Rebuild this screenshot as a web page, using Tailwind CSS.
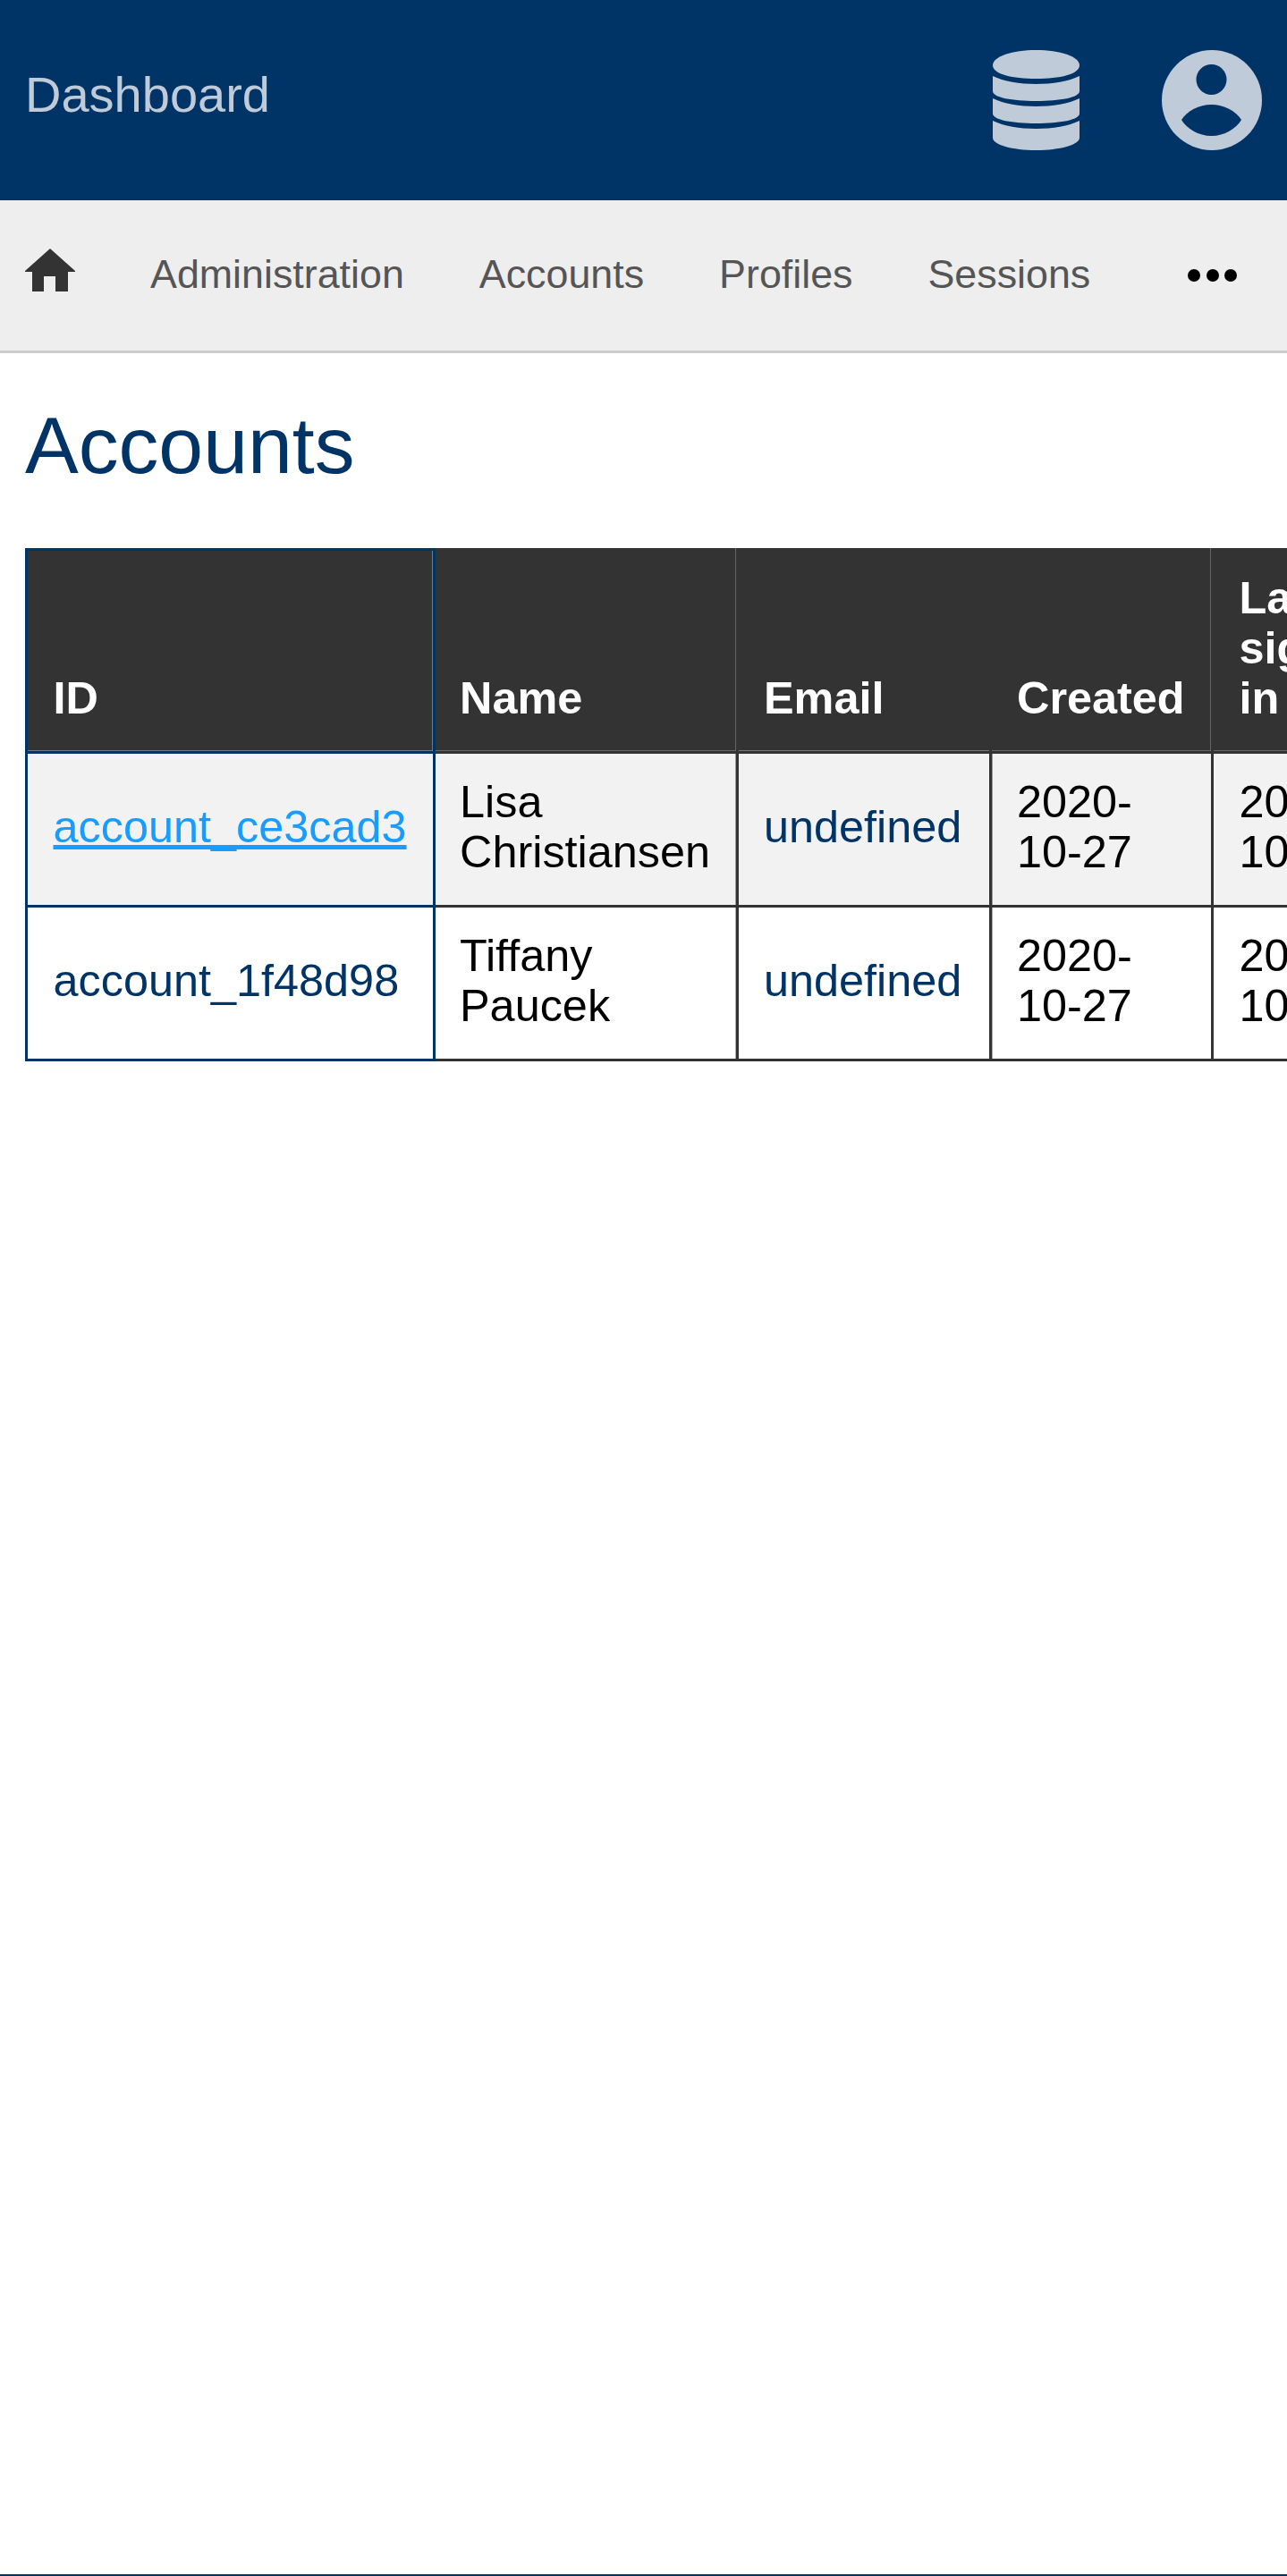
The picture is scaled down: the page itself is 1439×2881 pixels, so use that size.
<!DOCTYPE html>
<html lang="en">
<head>
    <meta charset="UTF-8">
    <meta name="viewport" content="width=device-width, initial-scale=1.0">
    <title>Accounts</title>
    <script src="https://cdn.jsdelivr.net/npm/@tailwindcss/browser@4"></script>
</head>
<body class="bg-white font-['Liberation_Sans',Arial,sans-serif]">
    <div class="min-h-[2881px] flex flex-col border-b-2 border-[#003366] overflow-hidden">
        <!-- Header -->
        <header class="h-[224px] bg-[#003366] flex items-center pl-[28px] text-[#bfcbd9]">
            <span class="text-[56px] leading-none flex-1 -mt-[12px]">Dashboard</span>
            <svg class="w-[97px] h-[112px] ml-[92px]" viewBox="0 0 97 112" fill="currentColor">
                <path d="M0 17C0 7 22 0 48.5 0S97 7 97 17S75 32 48.5 32S0 27 0 17Z" />
                <path d="M0 29C12 35 30 38 48.5 38S85 35 97 29V46C97 53 75 57 48.5 57S0 53 0 46Z" />
                <path d="M0 54C12 60 30 63 48.5 63S85 60 97 54V71C97 78 75 82 48.5 82S0 78 0 71Z" />
                <path d="M0 79C12 85 30 88 48.5 88S85 85 97 79V98C97 106 75 112 48.5 112S0 106 0 98Z" />
            </svg>
            <svg class="w-[112px] h-[112px] ml-[92px] mr-[28px]" viewBox="0 0 112 112">
                <circle cx="56" cy="56" r="56" fill="currentColor" />
                <circle cx="55.5" cy="33" r="17" fill="#003366" />
                <path d="M22 78C28 68 42 61 55.5 61S83 68 89 78C83 88 70 96 55.5 96S28 88 22 78Z" fill="#003366" />
            </svg>
        </header>

        <!-- Nav -->
        <nav class="h-[171px] bg-[#eeeeee] border-b-[3px] border-[#cccccc] flex items-center pl-[28px] text-[44.8px] text-[#555555] whitespace-nowrap">
            <svg class="w-[56px] h-[48px] -mt-[12px] shrink-0" viewBox="0 0 56 48" fill="#333333">
                <path d="M28 0L56 25V26H48V48H34V31H21V48H8V26H0V25Z" />
            </svg>
            <a class="ml-[84px] -mt-[2px]">Administration</a>
            <a class="ml-[84px] -mt-[2px]">Accounts</a>
            <a class="ml-[84px] -mt-[2px]">Profiles</a>
            <a class="ml-[84px] -mt-[2px]">Sessions</a>
            <div class="ml-[109px] flex gap-[6.5px] shrink-0">
                <span class="w-[14px] h-[14px] rounded-full bg-black"></span>
                <span class="w-[14px] h-[14px] rounded-full bg-black"></span>
                <span class="w-[14px] h-[14px] rounded-full bg-black"></span>
            </div>
        </nav>

        <!-- Content -->
        <main class="pl-[28px]">
            <h1 class="text-[89.6px] leading-[103px] text-[#003366] mt-[52px] mb-[63px]">Accounts</h1>
            <table class="table-fixed w-[1700px] border-separate border-spacing-0 text-[50.4px] leading-[56px] text-black">
                <colgroup>
                    <col class="w-[459px]">
                    <col class="w-[339px]">
                    <col class="w-[283px]">
                    <col class="w-[248px]">
                    <col class="w-[190px]">
                    <col>
                </colgroup>
                <thead>
                    <tr class="bg-[#333333] text-white font-bold text-left align-bottom">
                        <th class="pl-[28.5px] pr-[28px] pt-[28px] pb-[31px] border-[3px] border-[#003366] shadow-[inset_-1px_-1px_0_#777777]">ID</th>
                        <th class="pl-[27px] pr-[28px] pt-[28px] pb-[31px] border-r-[3px] border-b-[3px] border-[#333333] shadow-[inset_-1px_-1px_0_#666666]">Name</th>
                        <th class="pl-[28px] pr-[28px] pt-[28px] pb-[31px] border-r-[3px] border-b-[3px] border-[#333333] shadow-[inset_0_-1px_0_#777777]">Email</th>
                        <th class="pl-[28px] pr-[28px] pt-[28px] pb-[31px] border-r-[3px] border-b-[3px] border-[#333333] shadow-[inset_-1px_-1px_0_#666666]">Created</th>
                        <th class="pl-[28.5px] pr-[28px] pt-[28px] pb-[31px] border-r-[3px] border-b-[3px] border-[#333333] shadow-[inset_-1px_-1px_0_#666666]">Last sign in</th>
                        <th class="border-b-[3px] border-[#333333] shadow-[inset_0_-1px_0_#777777]"></th>
                    </tr>
                </thead>
                <tbody>
                    <tr class="bg-[#f2f2f2]">
                        <td class="pl-[28.5px] pr-[28px] pt-[26px] pb-[31px] border-x-[3px] border-b-[3px] border-[#003366]"><a class="text-[#1a9cff] underline">account_ce3cad3</a></td>
                        <td class="pl-[27px] pr-[28px] pt-[26px] pb-[31px] border-r-[3px] border-b-[3px] border-[#333333] shadow-[inset_-1px_0_0_#999999]">Lisa Christiansen</td>
                        <td class="pl-[28px] pr-[28px] pt-[26px] pb-[31px] border-r-[3px] border-b-[3px] border-[#333333] text-[#003366]">undefined</td>
                        <td class="pl-[28px] pr-[28px] pt-[26px] pb-[31px] border-r-[3px] border-b-[3px] border-[#333333] shadow-[inset_1px_0_0_#999999]">2020-10-27</td>
                        <td class="pl-[28.5px] pr-[28px] pt-[26px] pb-[31px] border-r-[3px] border-b-[3px] border-[#333333]">2020-10-27</td>
                        <td class="border-b-[3px] border-[#333333]"></td>
                    </tr>
                    <tr class="bg-white">
                        <td class="pl-[28.5px] pr-[28px] pt-[26px] pb-[31px] border-x-[3px] border-b-[3px] border-[#003366] text-[#003366]">account_1f48d98</td>
                        <td class="pl-[27px] pr-[28px] pt-[26px] pb-[31px] border-r-[3px] border-b-[3px] border-[#333333] shadow-[inset_-1px_0_0_#aaaaaa]">Tiffany Paucek</td>
                        <td class="pl-[28px] pr-[28px] pt-[26px] pb-[31px] border-r-[3px] border-b-[3px] border-[#333333] text-[#003366]">undefined</td>
                        <td class="pl-[28px] pr-[28px] pt-[26px] pb-[31px] border-r-[3px] border-b-[3px] border-[#333333] shadow-[inset_1px_0_0_#aaaaaa]">2020-10-27</td>
                        <td class="pl-[28.5px] pr-[28px] pt-[26px] pb-[31px] border-r-[3px] border-b-[3px] border-[#333333]">2020-10-27</td>
                        <td class="border-b-[3px] border-[#333333]"></td>
                    </tr>
                </tbody>
            </table>
        </main>
    </div>
</body>
</html>
